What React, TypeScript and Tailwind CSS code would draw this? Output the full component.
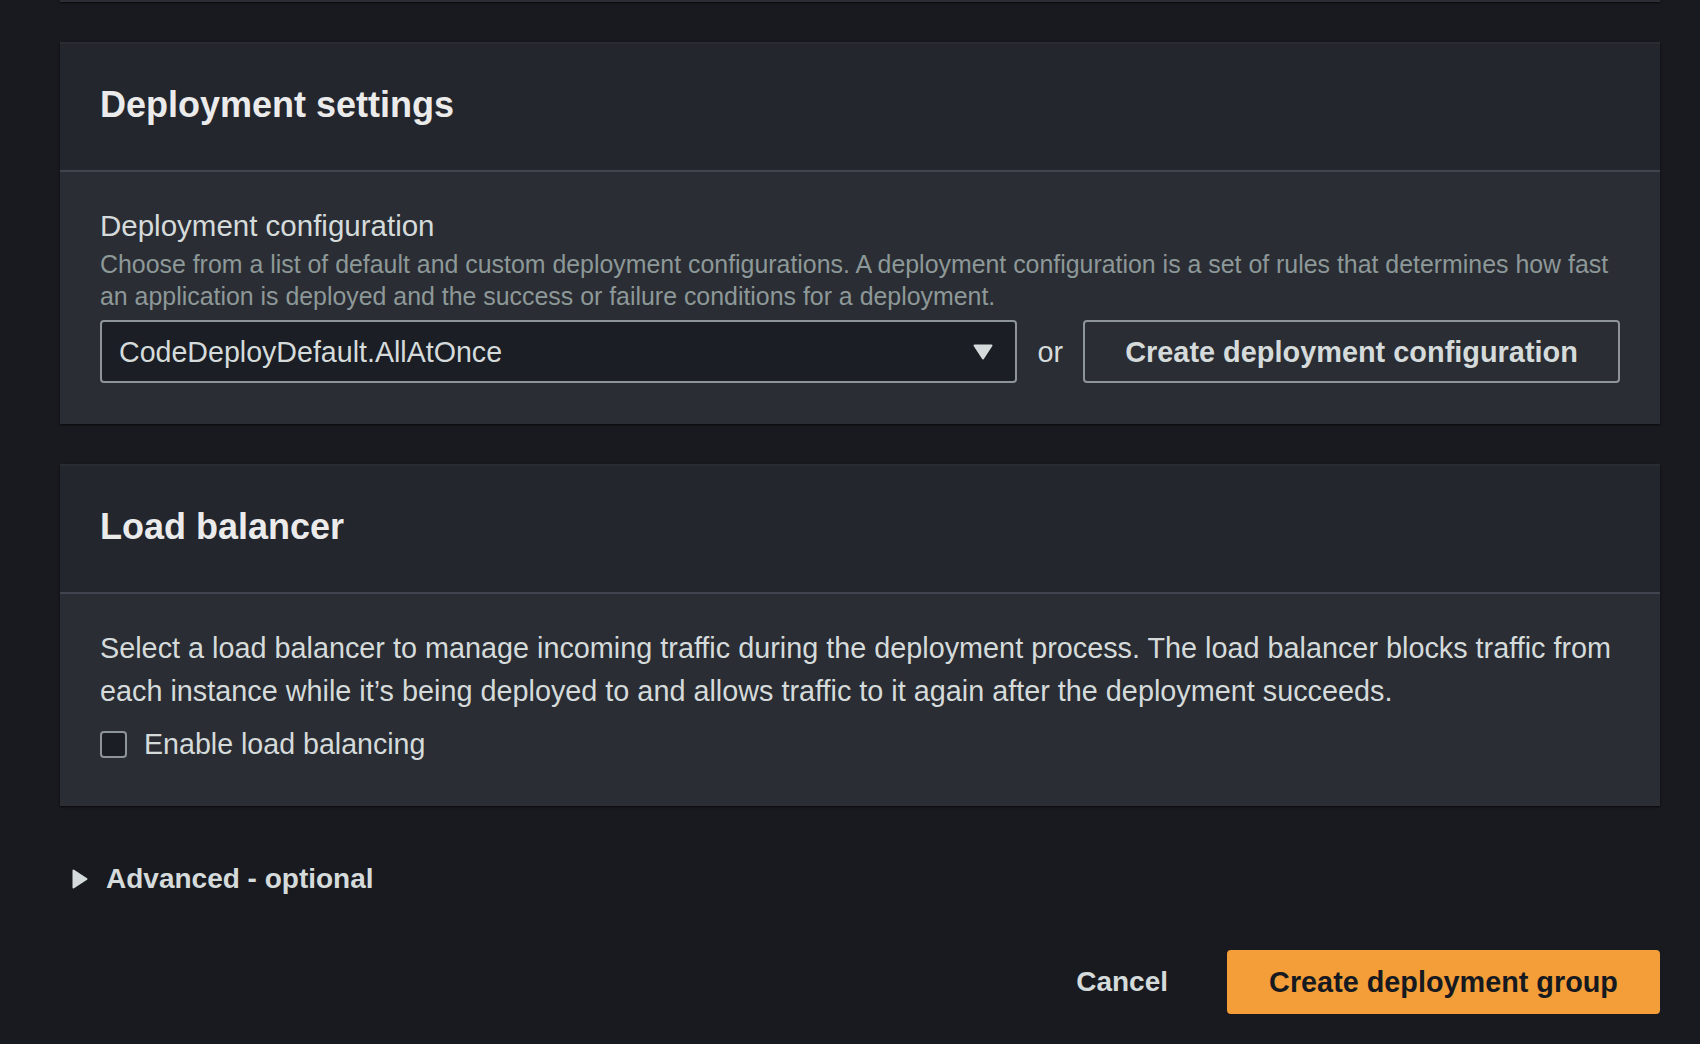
import React from "react";

const font = { fontFamily: '"Liberation Sans", Arial, sans-serif' };

function PanelHeader({ title }: { title: string }) {
  return (
    <>
      <div className="h-[128px] border-t-2 border-[#292c33] bg-[#23262d] pl-[40px] pt-[39px]">
        <h2 className="text-[36px] font-bold leading-[44px] text-[#ebebeb]">{title}</h2>
      </div>
      <div className="h-[2px] bg-[#414550]" />
    </>
  );
}

export default function App() {
  return (
    <div
      className="min-h-screen w-full bg-[#191a1f] pl-[60px] pr-[40px]"
      style={font}
    >
      {/* previous panel remnant */}
      <div className="h-[2px] bg-[#2b2e34] shadow-[0_1px_2px_rgba(0,0,0,0.7)]" />

      {/* Deployment settings */}
      <section className="mt-[40px] bg-[#2a2d33] shadow-[0_1px_2px_rgba(0,0,0,0.7)]">
        <PanelHeader title="Deployment settings" />
        <div className="px-[40px] pt-[32px] pb-[41px]">
          <div className="text-[29.5px] leading-[44px] text-[#d5dbdb]">Deployment configuration</div>
          <p className="text-[24.9px] leading-[32px] text-[#8d9898]">
            Choose from a list of default and custom deployment configurations. A deployment configuration is a set of rules that determines how fast an application is deployed and the success or failure conditions for a deployment.
          </p>
          <div className="mt-[8px] flex items-center gap-[20px]">
            <div className="flex h-[63px] flex-1 items-center justify-between rounded-[4px] border-2 border-[#8d9599] bg-[#1b1e24] pl-[17px] pr-[22px]">
              <span className="text-[28.6px] leading-[44px] text-[#d5dbdb]">CodeDeployDefault.AllAtOnce</span>
              <svg width="20" height="16" viewBox="0 0 20 16" aria-hidden="true">
                <path d="M1.5 1.5 H18.5 L10 14.5 Z" fill="#d5dbdb" stroke="#d5dbdb" strokeWidth="2" strokeLinejoin="round" />
              </svg>
            </div>
            <span className="text-[28.8px] leading-[44px] text-[#d5dbdb]">or</span>
            <button className="h-[63px] w-[537px] rounded-[4px] border-2 border-[#8d9599] bg-transparent text-[28.9px] font-bold leading-[44px] text-[#d5dbdb]">
              Create deployment configuration
            </button>
          </div>
        </div>
      </section>

      {/* Load balancer */}
      <section className="mt-[40px] bg-[#2a2d33] shadow-[0_1px_2px_rgba(0,0,0,0.7)]">
        <PanelHeader title="Load balancer" />
        <div className="px-[40px] pt-[33px] pb-[40px]">
          <p className="text-[28.8px] leading-[43px] text-[#d5dbdb]">
            Select a load balancer to manage incoming traffic during the deployment process. The load balancer blocks traffic from each instance while it’s being deployed to and allows traffic to it again after the deployment succeeds.
          </p>
          <label className="mt-[10px] flex h-[43px] items-center gap-[17px]">
            <span className="h-[27px] w-[27px] rounded-[4px] border-2 border-[#8d9599] bg-[#1b1e24]" />
            <span className="text-[28.6px] leading-[43px] text-[#d5dbdb]">Enable load balancing</span>
          </label>
        </div>
      </section>

      {/* Advanced */}
      <div className="mt-[51px] flex h-[44px] items-center pl-[12px]">
        <svg width="16" height="20" viewBox="0 0 16 20" aria-hidden="true">
          <path d="M1.5 1.5 L14.5 10 L1.5 18.5 Z" fill="#d5dbdb" stroke="#d5dbdb" strokeWidth="2" strokeLinejoin="round" />
        </svg>
        <span className="ml-[18px] text-[28px] font-bold leading-[44px] text-[#d5dbdb]">Advanced - optional</span>
      </div>

      {/* Actions */}
      <div className="mt-[49px] flex items-center justify-end gap-[17px]">
        <button className="h-[64px] border-2 border-transparent px-[40px] text-[28px] font-bold leading-[44px] text-[#d5dbdb]">
          Cancel
        </button>
        <button className="h-[64px] w-[433px] rounded-[4px] border-2 border-[#f39e38] bg-[#f39e38] text-[28.8px] font-bold leading-[44px] text-[#16191f]">
          Create deployment group
        </button>
      </div>
    </div>
  );
}
